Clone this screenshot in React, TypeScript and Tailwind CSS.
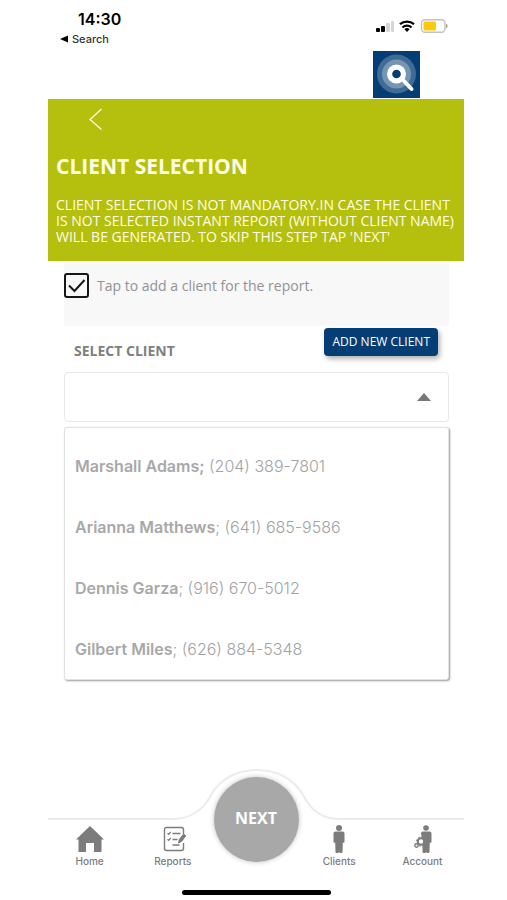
import { useState } from 'react';

interface Client { name: string; phone: string; boldSeparator?: boolean; }

const clients: Client[] = [
  { name: 'Marshall Adams', phone: '(204) 389-7801', boldSeparator: true },
  { name: 'Arianna Matthews', phone: '(641) 685-9586' },
  { name: 'Dennis Garza', phone: '(916) 670-5012' },
  { name: 'Gilbert Miles', phone: '(626) 884-5348' },
];

function HomeIcon() {
  return (
    <svg viewBox="0 0 28 28" className="size-7" fill="currentColor" aria-hidden="true">
      <path d="M14 1 28 14.500h-2.500V27H18v-9h-8v9H2.500V14.500H0z" />
    </svg>
  );
}

function ReportsIcon() {
  return (
    <svg viewBox="0 0 28 28" className="size-7" fill="none" stroke="currentColor" strokeWidth="1.4" aria-hidden="true">
      <path d="M24.500 9V4.500a2 2 0 0 0-2-2h-15a2 2 0 0 0-2 2v19a2 2 0 0 0 2 2h15a2 2 0 0 0 2-2V18" />
      <path d="m8.500 8.200 1.200 1.200 2-2.400M13.500 8.500h8M8.500 14.200l1.200 1.200 2-2.400M13.500 14.500h5M13.500 20h7" strokeWidth="1.300" />
      <path d="m19.500 18 .8-3.500 4.200-5.500 2.300 1.800-4.200 5.600z" fill="currentColor" strokeWidth="1" />
    </svg>
  );
}

function ClientsIcon() {
  return (
    <svg viewBox="0 0 28 28" className="size-7" fill="currentColor" aria-hidden="true">
      <circle cx="14" cy="3" r="3" />
      <path d="M10.500 6.500h7a2 2 0 0 1 2 2V17a1 1 0 0 1-1.700.5L17.500 27a1 1 0 0 1-1 1h-1.700l-.8-1-.8 1h-1.700a1 1 0 0 1-1-1l-.3-9.500A1 1 0 0 1 8.500 17V8.500a2 2 0 0 1 2-2z" />
    </svg>
  );
}

function AccountIcon() {
  return (
    <svg viewBox="0 0 28 28" className="size-7" fill="currentColor" aria-hidden="true">
      <circle cx="18" cy="3" r="2.800" />
      <path d="M15 6.500h6.500a2 2 0 0 1 2 2V17a1 1 0 0 1-1.700.5L21.500 27a1 1 0 0 1-1 1h-1.600l-.8-1-.8 1h-1.800a1 1 0 0 1-1-1v-9L13 8a2 2 0 0 1 2-1.500z" />
      <circle cx="13" cy="16.500" r="3.200" fill="white" stroke="currentColor" strokeWidth="2" />
      <circle cx="13" cy="16.500" r="4.600" fill="none" stroke="currentColor" strokeWidth="1" strokeDasharray="1.800 1.800" />
      <circle cx="8.500" cy="20.500" r="1.700" fill="white" stroke="currentColor" strokeWidth="1.400" />
    </svg>
  );
}

function StatusBar() {
  return (
    <div className="flex items-start justify-between pr-4 pl-3 pt-2 font-['Inter',sans-serif] text-black">
      <div>
        <p className="pl-[18px] text-base leading-[22px] font-semibold">14:30</p>
        <a href="#search" className="flex items-center gap-1 text-[11px] leading-[18px] font-medium text-[#333]">
          <svg viewBox="0 0 8 8" className="size-2" aria-hidden="true"><path d="M8 .5v7L0 4z" fill="black" /></svg>
          Search
        </a>
      </div>
      <div className="flex items-center gap-1 pt-[11px]">
        <svg viewBox="0 0 20 14" className="h-[14px] w-5" aria-hidden="true">
          <rect x="2" y="9" width="4" height="4" rx="1" />
          <rect x="7" y="7" width="4" height="6" rx="1" />
          <rect x="12" y="4" width="4" height="9" rx="1" fill="#d5d5d5" />
          <rect x="17" y="2" width="3" height="11" rx="1" fill="#d5d5d5" />
        </svg>
        <svg viewBox="0 0 18 14" className="h-[14px] w-[18px]" fill="none" stroke="black" strokeWidth="2.300" aria-hidden="true">
          <path d="M2 5.200a10.500 10.500 0 0 1 14 0M4.500 8.500a6.500 6.500 0 0 1 9 0" />
          <path d="m9 13-2.600-2.800a4 4 0 0 1 5.200 0z" fill="black" stroke="none" />
        </svg>
        <svg viewBox="0 0 28 14" className="h-[14px] w-7" aria-hidden="true">
          <rect x="1.500" y=".8" width="23.500" height="12.400" rx="3.500" fill="white" stroke="#c2c2c2" strokeWidth="1.400" />
          <rect x="3.500" y="2.500" width="12.500" height="9" rx="1.500" fill="#facb0c" />
          <path d="M26 4.800c2.200.8 2.200 3.600 0 4.400z" fill="#a5a5a5" />
        </svg>
      </div>
    </div>
  );
}

function Logo() {
  return (
    <svg viewBox="0 0 47 47" className="mr-11 ml-auto size-[47px]" role="img" aria-label="Inspection logo">
      <rect width="47" height="47" fill="#053d75" />
      <circle cx="23.500" cy="23" r="19.500" fill="#416b95" />
      <circle cx="23.500" cy="23" r="14.500" fill="#7595b3" />
      <path d="m31 30 7.500 8" stroke="white" strokeWidth="4" strokeLinecap="round" />
      <circle cx="23.500" cy="23" r="9.500" fill="white" />
      <circle cx="23.500" cy="23" r="4.300" fill="#053d75" />
    </svg>
  );
}

function NavItem({ label, children }: { label: string; children: React.ReactNode }) {
  return (
    <a href={`#${label.toLowerCase()}`} className="flex flex-col items-center pt-[5px] font-['Inter',sans-serif] text-[10px] leading-4 font-medium text-[#7c7c7c]">
      {children}
      {label}
    </a>
  );
}

export default function App() {
  const [addClient, setAddClient] = useState(true);
  const [selected, setSelected] = useState('');

  return (
    <div className="flex min-h-screen flex-col bg-white pr-[43px] pl-12 font-['Open_Sans',sans-serif]">
      <StatusBar />
      <div className="pt-[3px] pb-px">
        <Logo />
      </div>

      <header className="bg-[#b5bf0d] pt-2 pb-4 pl-2 text-[#fffde8]">
        <button type="button" aria-label="Back" className="ml-8 block">
          <svg viewBox="0 0 16 24" className="h-6 w-4" fill="none" stroke="currentColor" strokeWidth="1.200" aria-hidden="true">
            <path d="M13.500 2 2 12.500l11.500 10" />
          </svg>
        </button>
        <h1 className="mt-5 text-[21px] leading-[30px] font-bold">CLIENT SELECTION</h1>
        <p className="mt-4 text-sm leading-4">
          CLIENT SELECTION IS NOT MANDATORY.IN CASE THE CLIENT<br />
          IS NOT SELECTED INSTANT REPORT (WITHOUT CLIENT NAME)<br />
          WILL BE GENERATED. TO SKIP THIS STEP TAP 'NEXT'
        </p>
      </header>

      <main className="pr-[15px] pl-4">
        <div className="bg-[#f8f8f8] pt-3 pb-7">
          <label className="flex items-center gap-2 text-sm text-[#929297]">
            <span className="grid size-[25px] place-items-center">
              <input
                type="checkbox"
                checked={addClient}
                onChange={e => setAddClient(e.target.checked)}
                className="peer col-start-1 row-start-1 size-[25px] appearance-none rounded-[3px] border-2 border-[#171717] bg-[#f8f8f8]"
              />
              <svg viewBox="0 0 25 25" className="pointer-events-none invisible col-start-1 row-start-1 size-[25px] peer-checked:visible" fill="none" stroke="#171717" strokeWidth="2" aria-hidden="true">
                <path d="m5 12.500 5.500 5.500L20.500 7" />
              </svg>
            </span>
            Tap to add a client for the report.
          </label>
        </div>

        <div className="flex items-start justify-between pt-[2px] pr-[11px] pl-[10px]">
          <label htmlFor="client" className="pt-[13px] text-sm leading-5 font-bold text-[#7c807f]">SELECT CLIENT</label>
          <button type="button" className="h-7 rounded bg-[#053d75] px-2 pb-px text-xs text-white shadow-[2px_3px_5px_rgba(0,0,0,0.3)]">
            ADD NEW CLIENT
          </button>
        </div>

        <div className="mt-[11px] grid items-center">
          <select
            id="client"
            value={selected}
            onChange={e => setSelected(e.target.value)}
            className="col-start-1 row-start-1 h-[50px] w-full appearance-none rounded border border-[#e8e8e8] bg-white px-3 text-[#929297]"
          >
            <option value=""></option>
            {clients.map(client => <option key={client.name}>{client.name}</option>)}
          </select>
          <svg viewBox="0 0 14 8" className="pointer-events-none col-start-1 row-start-1 mr-[18px] h-2 w-[14px] justify-self-end" aria-hidden="true">
            <path d="M7 0l7 8H0z" fill="#787878" />
          </svg>
        </div>

        <ul className="mt-[5px] flex flex-col gap-px rounded-[3px] border border-[#e2e2e2] bg-white pt-2 shadow-[1px_1px_2px_rgba(0,0,0,0.4)]">
          {clients.map(client => (
            <li key={client.name}>
              <button
                type="button"
                onClick={() => setSelected(client.name)}
                className="h-[60px] w-full px-[10px] text-left font-['Inter',sans-serif] text-base font-light text-[#a3a3a3]"
              >
                <span className="font-semibold text-[#a8a8a8]">{client.name}{client.boldSeparator && ';'}</span>
                {!client.boldSeparator && ';'} {client.phone}
              </button>
            </li>
          ))}
        </ul>
      </main>

      <footer className="mt-auto pb-[5px]">
        {/* Bar edge that bulges over the NEXT button */}
        <div className="flex items-end">
          <div className="h-[2px] flex-1 bg-[#ececec]" />
          <svg viewBox="0 0 166 52" className="h-[52px] w-[166px]" fill="none" stroke="#ececec" strokeWidth="2" aria-hidden="true">
            <path d="M0 51C16 51 30 43 38 27 47 11 64 2 84 2s37 9 46 25c8 16 20 24 36 24" />
          </svg>
          <div className="h-[2px] flex-1 bg-[#ececec]" />
        </div>
        <nav className="grid h-[70px] grid-cols-5 items-start">
          <NavItem label="Home"><HomeIcon /></NavItem>
          <NavItem label="Reports"><ReportsIcon /></NavItem>
          <button type="button" className="-mt-[43px] size-[85px] justify-self-center rounded-full bg-[#a8a8a8] pb-1 font-bold text-white shadow-[0_0_5px_rgba(0,0,0,0.25)]">
            NEXT
          </button>
          <NavItem label="Clients"><ClientsIcon /></NavItem>
          <NavItem label="Account"><AccountIcon /></NavItem>
        </nav>
        <div className="mx-auto h-[5px] w-[149px] rounded-full bg-black" />
      </footer>
    </div>
  );
}
